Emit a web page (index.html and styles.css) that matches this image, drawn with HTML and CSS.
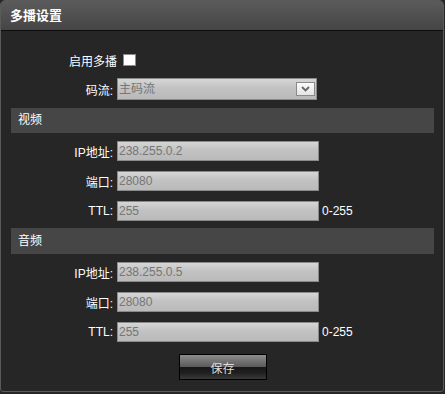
FILE: index.html
```html
<!DOCTYPE html>
<html lang="zh">

<head>
    <meta charset="UTF-8">
    <meta name="viewport" content="width=device-width, initial-scale=1.0">
    <title>多播设置</title>
    <link rel="stylesheet" href="styles.css">
</head>

<body>
    <div class="panel">
        <div class="panel-head">多播设置</div>
        <div class="panel-body">
            <div class="check-row">
                <span>启用多播</span>
                <span class="checkbox"></span>
            </div>
            <div class="grid top-grid">
                <label class="label">码流:</label>
                <div class="select">
                    <span>主码流</span>
                    <span class="arrow">
                        <svg width="9" height="6" viewBox="0 0 9 6">
                            <path d="M1 1 L4.5 4.5 L8 1" fill="none" stroke="#666" stroke-width="1.8" />
                        </svg>
                    </span>
                </div>
            </div>

            <div class="section-title video">视频</div>
            <div class="grid">
                <label class="label">IP地址:</label>
                <div class="input">238.255.0.2</div>
                <span></span>
                <label class="label">端口:</label>
                <div class="input">28080</div>
                <span></span>
                <label class="label">TTL:</label>
                <div class="input">255</div>
                <span class="hint">0-255</span>
            </div>

            <div class="section-title audio">音频</div>
            <div class="grid">
                <label class="label">IP地址:</label>
                <div class="input">238.255.0.5</div>
                <span></span>
                <label class="label">端口:</label>
                <div class="input">28080</div>
                <span></span>
                <label class="label">TTL:</label>
                <div class="input">255</div>
                <span class="hint">0-255</span>
            </div>

            <div class="buttons">
                <button>保存</button>
            </div>
        </div>
    </div>
</body>

</html>
```

FILE: styles.css
```css
:root {
    --panel-bg: #262626;
    /* 面板背景 */
    --bar-bg: #464646;
    /* 分组标题背景 */
    --border-color: #5a5a5a;
    --field-border: #8a8a8a;
    --field-text: #767676;
}

body {
    margin: 0;
    background: var(--panel-bg);
    font-family: "Liberation Sans", "Noto Sans CJK SC", sans-serif;
    font-size: 12px;
    color: #fff;
}

.panel {
    width: 442px;
    height: 390px;
    border: 1px solid var(--border-color);
    border-radius: 5px 5px 3px 3px;
    background: var(--panel-bg);
    overflow: hidden;
}

.panel-head {
    height: 29px;
    line-height: 29px;
    padding-left: 9px;
    font-size: 13px;
    font-weight: bold;
    background: linear-gradient(#5b5b5b, #454545);
    border-bottom: 1px solid #0c0c0c;
}

.panel-body {
    padding: 0 9px 0 10px;
}

.check-row {
    display: flex;
    align-items: center;
    gap: 6px;
    height: 20px;
    margin-top: 19px;
    padding-left: 58px;
}

.checkbox {
    width: 11px;
    height: 10px;
    background: #fff;
    border: 1px solid #8a8a8a;
}

.grid {
    display: grid;
    grid-template-columns: 102px 202px auto;
    column-gap: 4px;
    row-gap: 10px;
    align-items: center;
}

.top-grid {
    margin-top: 8px;
    height: 22px;
}

.label {
    text-align: right;
    white-space: nowrap;
}

.input,
.select {
    box-sizing: border-box;
    height: 20px;
    line-height: 18px;
    padding-left: 1px;
    border: 1px solid var(--field-border);
    background: linear-gradient(#d6d6d6, #c2c2c2 45%, #bababa);
    color: var(--field-text);
}

.select {
    width: 200px;
    height: 22px;
    line-height: 20px;
    display: flex;
    justify-content: space-between;
    align-items: center;
    padding-right: 1px;
}

.arrow {
    box-sizing: border-box;
    width: 19px;
    height: 14px;
    display: grid;
    place-items: center;
    border: 1px solid #8a8a8a;
    background: linear-gradient(#fafafa, #e4e4e4);
}

.hint {
    margin-left: -1px;
}

.section-title {
    box-sizing: border-box;
    height: 26px;
    line-height: 26px;
    padding-left: 7px;
    background: var(--bar-bg);
    margin-bottom: 7px;
}

.video {
    margin-top: 8px;
    height: 25px;
    line-height: 25px;
    margin-bottom: 8px;
}

.audio {
    margin-top: 7px;
    margin-bottom: 8px;
}

.buttons {
    display: flex;
    justify-content: center;
    margin-top: 12px;
}

button {
    width: 88px;
    height: 26px;
    border: 1px solid #000;
    background: linear-gradient(#8c8c8c, #5c5c5c 48%, #161616 50%, #202020 75%, #3a3a3a);
    color: #dcdcdc;
    font-family: "Liberation Sans", "Noto Sans CJK SC", sans-serif;
    font-size: 12px;
    padding: 0;
    cursor: pointer;
}
```
